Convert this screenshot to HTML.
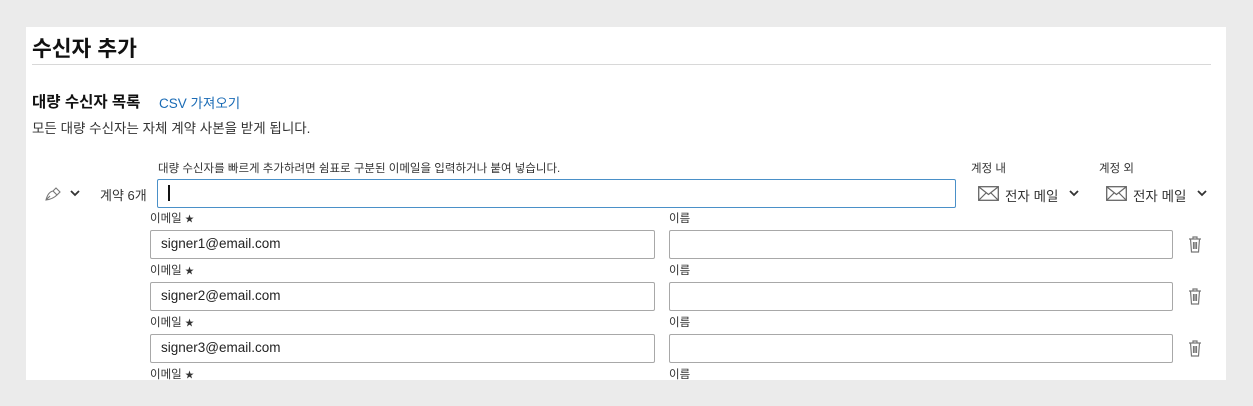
<!DOCTYPE html><html><head><meta charset="utf-8"><style>
body{margin:0;background:#ebebeb;width:1253px;height:406px;overflow:hidden;font-family:"Liberation Sans","Noto Sans CJK KR",sans-serif;color:#222}
.p{position:absolute;left:26px;top:27px;width:1200px;height:353px;background:#fff}
.a{position:absolute;white-space:nowrap}
.in{position:absolute;border:1px solid #a8a8a8;border-radius:2px;height:27px;box-sizing:border-box;font-size:13.5px;line-height:26px;padding-left:10px;color:#222}
.l{font-size:11.5px;color:#333}
.l small{font-size:9px}
</style></head><body>
<div class="p"></div>
<div class="a" style="left:32px;top:32px;font-size:21.5px;font-weight:bold;color:#111">수신자 추가</div>
<div class="a" style="left:32px;top:64px;width:1179px;height:1px;background:#d8d8d8"></div>
<div class="a" style="left:32px;top:90px;font-size:15.5px;font-weight:bold;color:#111">대량 수신자 목록</div>
<div class="a" style="left:159px;top:92px;font-size:13.5px;color:#1a6bb5">CSV 가져오기</div>
<div class="a" style="left:32px;top:117px;font-size:13.5px;color:#333">모든 대량 수신자는 자체 계약 사본을 받게 됩니다.</div>
<div class="a l" style="left:158px;top:160px">대량 수신자를 빠르게 추가하려면 쉼표로 구분된 이메일을 입력하거나 붙여 넣습니다.</div>
<div class="a l" style="left:971px;top:160px">계정 내</div>
<div class="a l" style="left:1099px;top:160px">계정 외</div>
<svg class="a" style="left:44px;top:186px" width="18" height="16" viewBox="0 0 18 16"><path d="M2 14 Q4 6 9 5 L13 9 Q9 13 2 14 Z M9 5 L12 2 L16 6 L13 9 M2 14 L6 10" fill="none" stroke="#777" stroke-width="1.1"/></svg>
<svg class="a" style="left:70px;top:189px" width="10" height="8" viewBox="0 0 10 8"><path d="M1 2 L5 6 L9 2" fill="none" stroke="#333" stroke-width="1.8"/></svg>
<div class="a" style="left:100px;top:185px;font-size:13px;color:#333">계약 6개</div>
<div class="in" style="left:157px;top:179px;width:799px;height:29px;border-color:#4a90c8"><span style="display:inline-block;width:1.5px;height:16px;background:#111;vertical-align:middle"></span></div>
<svg class="a" style="left:978px;top:186px" width="21" height="15" viewBox="0 0 21 15"><rect x="0.7" y="0.7" width="19.6" height="13.6" fill="none" stroke="#666" stroke-width="1.3"/><path d="M1 1 L10.5 8.5 L20 1 M1 14 L8 7 M20 14 L13 7" fill="none" stroke="#666" stroke-width="1.2"/></svg>
<div class="a" style="left:1005px;top:185px;font-size:13.5px;color:#333">전자 메일</div>
<svg class="a" style="left:1069px;top:189px" width="10" height="8" viewBox="0 0 10 8"><path d="M1 2 L5 6 L9 2" fill="none" stroke="#333" stroke-width="1.8"/></svg>
<svg class="a" style="left:1106px;top:186px" width="21" height="15" viewBox="0 0 21 15"><rect x="0.7" y="0.7" width="19.6" height="13.6" fill="none" stroke="#666" stroke-width="1.3"/><path d="M1 1 L10.5 8.5 L20 1 M1 14 L8 7 M20 14 L13 7" fill="none" stroke="#666" stroke-width="1.2"/></svg>
<div class="a" style="left:1133px;top:185px;font-size:13.5px;color:#333">전자 메일</div>
<svg class="a" style="left:1197px;top:189px" width="10" height="8" viewBox="0 0 10 8"><path d="M1 2 L5 6 L9 2" fill="none" stroke="#333" stroke-width="1.8"/></svg>

<div class="a l" style="left:150px;top:210px">이메일 <small>★</small></div><div class="a l" style="left:669px;top:210px">이름</div>
<div class="in" style="left:150px;top:230px;width:505px;height:29px">signer1@email.com</div><div class="in" style="left:669px;top:230px;width:504px;height:29px"></div>
<div class="a l" style="left:150px;top:262px">이메일 <small>★</small></div><div class="a l" style="left:669px;top:262px">이름</div>
<div class="in" style="left:150px;top:282px;width:505px;height:29px">signer2@email.com</div><div class="in" style="left:669px;top:282px;width:504px;height:29px"></div>
<div class="a l" style="left:150px;top:314px">이메일 <small>★</small></div><div class="a l" style="left:669px;top:314px">이름</div>
<div class="in" style="left:150px;top:334px;width:505px;height:29px">signer3@email.com</div><div class="in" style="left:669px;top:334px;width:504px;height:29px"></div>
<div class="a l" style="left:150px;top:366px">이메일 <small>★</small></div><div class="a l" style="left:669px;top:366px">이름</div>
<svg class="a" style="left:1188px;top:236px" width="14" height="17" viewBox="0 0 14 17"><g fill="none" stroke="#777" stroke-width="1.2"><path d="M1 3 H13 M5 3 V1 H9 V3 M2.5 3 L3.5 16 H10.5 L11.5 3 M5.5 6 V13 M7 6 V13 M8.5 6 V13"/></g></svg>
<svg class="a" style="left:1188px;top:288px" width="14" height="17" viewBox="0 0 14 17"><g fill="none" stroke="#777" stroke-width="1.2"><path d="M1 3 H13 M5 3 V1 H9 V3 M2.5 3 L3.5 16 H10.5 L11.5 3 M5.5 6 V13 M7 6 V13 M8.5 6 V13"/></g></svg>
<svg class="a" style="left:1188px;top:340px" width="14" height="17" viewBox="0 0 14 17"><g fill="none" stroke="#777" stroke-width="1.2"><path d="M1 3 H13 M5 3 V1 H9 V3 M2.5 3 L3.5 16 H10.5 L11.5 3 M5.5 6 V13 M7 6 V13 M8.5 6 V13"/></g></svg>
</body></html>
